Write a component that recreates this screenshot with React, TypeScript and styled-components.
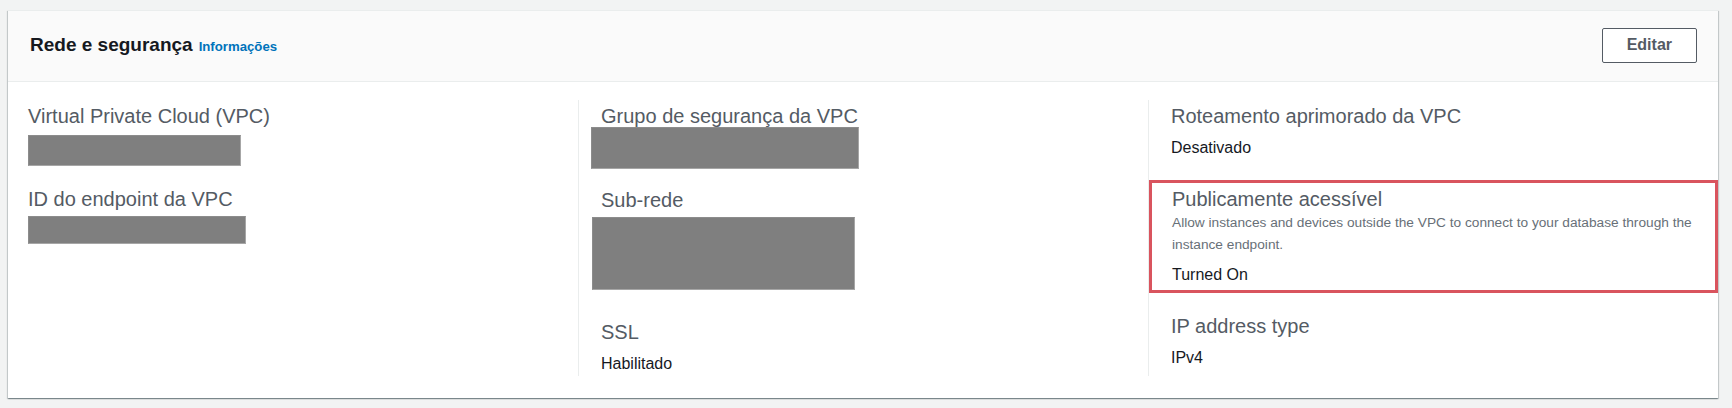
import styled, { createGlobalStyle, css } from "styled-components";

const GlobalStyle = createGlobalStyle`
  html,
  body {
    margin: 0;
    padding: 0;
    background-color: #f2f3f3;
  }

  body {
    font-family: "Liberation Sans", Arial, sans-serif;
    color: #16191f;
  }

  #root {
    padding: 10px 14px 10px 8px;
  }
`;

export default function App() {
  return (
    <>
      <GlobalStyle />
      <StCard>
        <StHeader>
          <StTitleGroup>
            <StTitle>Rede e segurança</StTitle>
            <StInfoLink href="#">Informações</StInfoLink>
          </StTitleGroup>
          <StButton type="button">Editar</StButton>
        </StHeader>

        <StBody>
          <StColumn $pad={20}>
            <StItem>
              <StLabel>Virtual Private Cloud (VPC)</StLabel>
              <StRedacted $w={213} $h={31} $mt={6} />
            </StItem>
            <StItem>
              <StLabel>ID do endpoint da VPC</StLabel>
              <StRedacted $w={218} $h={28} $mt={4} />
            </StItem>
          </StColumn>

          <StColumn $divider $pad={22}>
            <StItem>
              <StLabel>Grupo de segurança da VPC</StLabel>
              <StRedacted $w={268} $h={42} $mt={-2} $mb={-2} $ml={-10} />
            </StItem>
            <StItem>
              <StLabel>Sub-rede</StLabel>
              <StRedacted $w={263} $h={73} $mt={4} $mb={9} $ml={-9} />
            </StItem>
            <StItem>
              <StLabel>SSL</StLabel>
              <StValue>Habilitado</StValue>
            </StItem>
          </StColumn>

          <StColumn $divider>
            <StItem $inset>
              <StLabel>Roteamento aprimorado da VPC</StLabel>
              <StValue>Desativado</StValue>
            </StItem>
            <StItem $highlight>
              <StLabel>Publicamente acessível</StLabel>
              <StDescription>
                Allow instances and devices outside the VPC to connect to your database through the
                instance endpoint.
              </StDescription>
              <StValue>Turned On</StValue>
            </StItem>
            <StItem $inset>
              <StLabel>IP address type</StLabel>
              <StValue>IPv4</StValue>
            </StItem>
          </StColumn>
        </StBody>
      </StCard>
    </>
  );
}

const StCard = styled.section`
  background-color: #ffffff;
  border-top: 1px solid #eaeded;
  box-shadow:
    0 1px 1px 0 rgba(0, 28, 36, 0.3),
    1px 1px 1px 0 rgba(0, 28, 36, 0.15),
    -1px 1px 1px 0 rgba(0, 28, 36, 0.15);
`;

const StHeader = styled.header`
  box-sizing: border-box;
  height: 71px;
  padding: 0 21px 2px 22px;

  display: flex;
  justify-content: space-between;
  align-items: center;

  background-color: #fafafa;
  border-bottom: 1px solid #eaeded;
`;

const StTitleGroup = styled.div`
  display: flex;
  align-items: baseline;
  gap: 6px;
`;

const StTitle = styled.h2`
  margin: 0;

  font-size: 19px;
  font-weight: 700;
  line-height: 24px;
  color: #16191f;
`;

const StInfoLink = styled.a`
  font-size: 13.2px;
  font-weight: 700;
  color: #0073bb;
  text-decoration: none;
`;

const StButton = styled.button`
  box-sizing: border-box;
  height: 35px;
  padding: 0 24px;

  background-color: #ffffff;
  border: 1px solid #545b64;
  border-radius: 2px;

  font-family: inherit;
  font-size: 16px;
  font-weight: 700;
  color: #545b64;

  &:hover {
    cursor: pointer;
  }
`;

const StBody = styled.div`
  padding: 18px 0 22px;

  display: grid;
  grid-template-columns: repeat(3, 1fr);
`;

const StColumn = styled.div<{ $divider?: boolean; $pad?: number }>`
  padding: 3px 0 0 ${({ $pad }) => $pad ?? 0}px;

  display: flex;
  flex-direction: column;
  gap: 20px;

  ${({ $divider }) =>
    $divider &&
    css`
      border-left: 1px solid #eaeded;
    `};
`;

const StItem = styled.div<{ $inset?: boolean; $highlight?: boolean }>`
  display: flex;
  flex-direction: column;

  ${({ $inset }) =>
    $inset &&
    css`
      padding: 0 22px;
    `};

  ${({ $highlight }) =>
    $highlight &&
    css`
      padding: 3px 10px 3px 20px;
      border: 3px solid #d9545e;
    `};
`;

const StLabel = styled.div`
  font-size: 20px;
  line-height: 26px;
  color: #545b64;
`;

const StValue = styled.div`
  margin-top: 7px;

  font-size: 16px;
  line-height: 24px;
  color: #16191f;
`;

const StDescription = styled.div`
  font-size: 13.7px;
  line-height: 22px;
  color: #687078;
`;

const StRedacted = styled.div<{ $w: number; $h: number; $mt?: number; $mb?: number; $ml?: number }>`
  box-sizing: border-box;
  width: ${({ $w }) => $w}px;
  height: ${({ $h }) => $h}px;
  margin: ${({ $mt = 0, $mb = 0, $ml = 0 }) => `${$mt}px 0 ${$mb}px ${$ml}px`};

  background-color: #7f7f7f;
  border: 1px solid #8c8c8c;
  border-right-color: #a6a6a6;
  border-bottom-color: #a6a6a6;
`;
